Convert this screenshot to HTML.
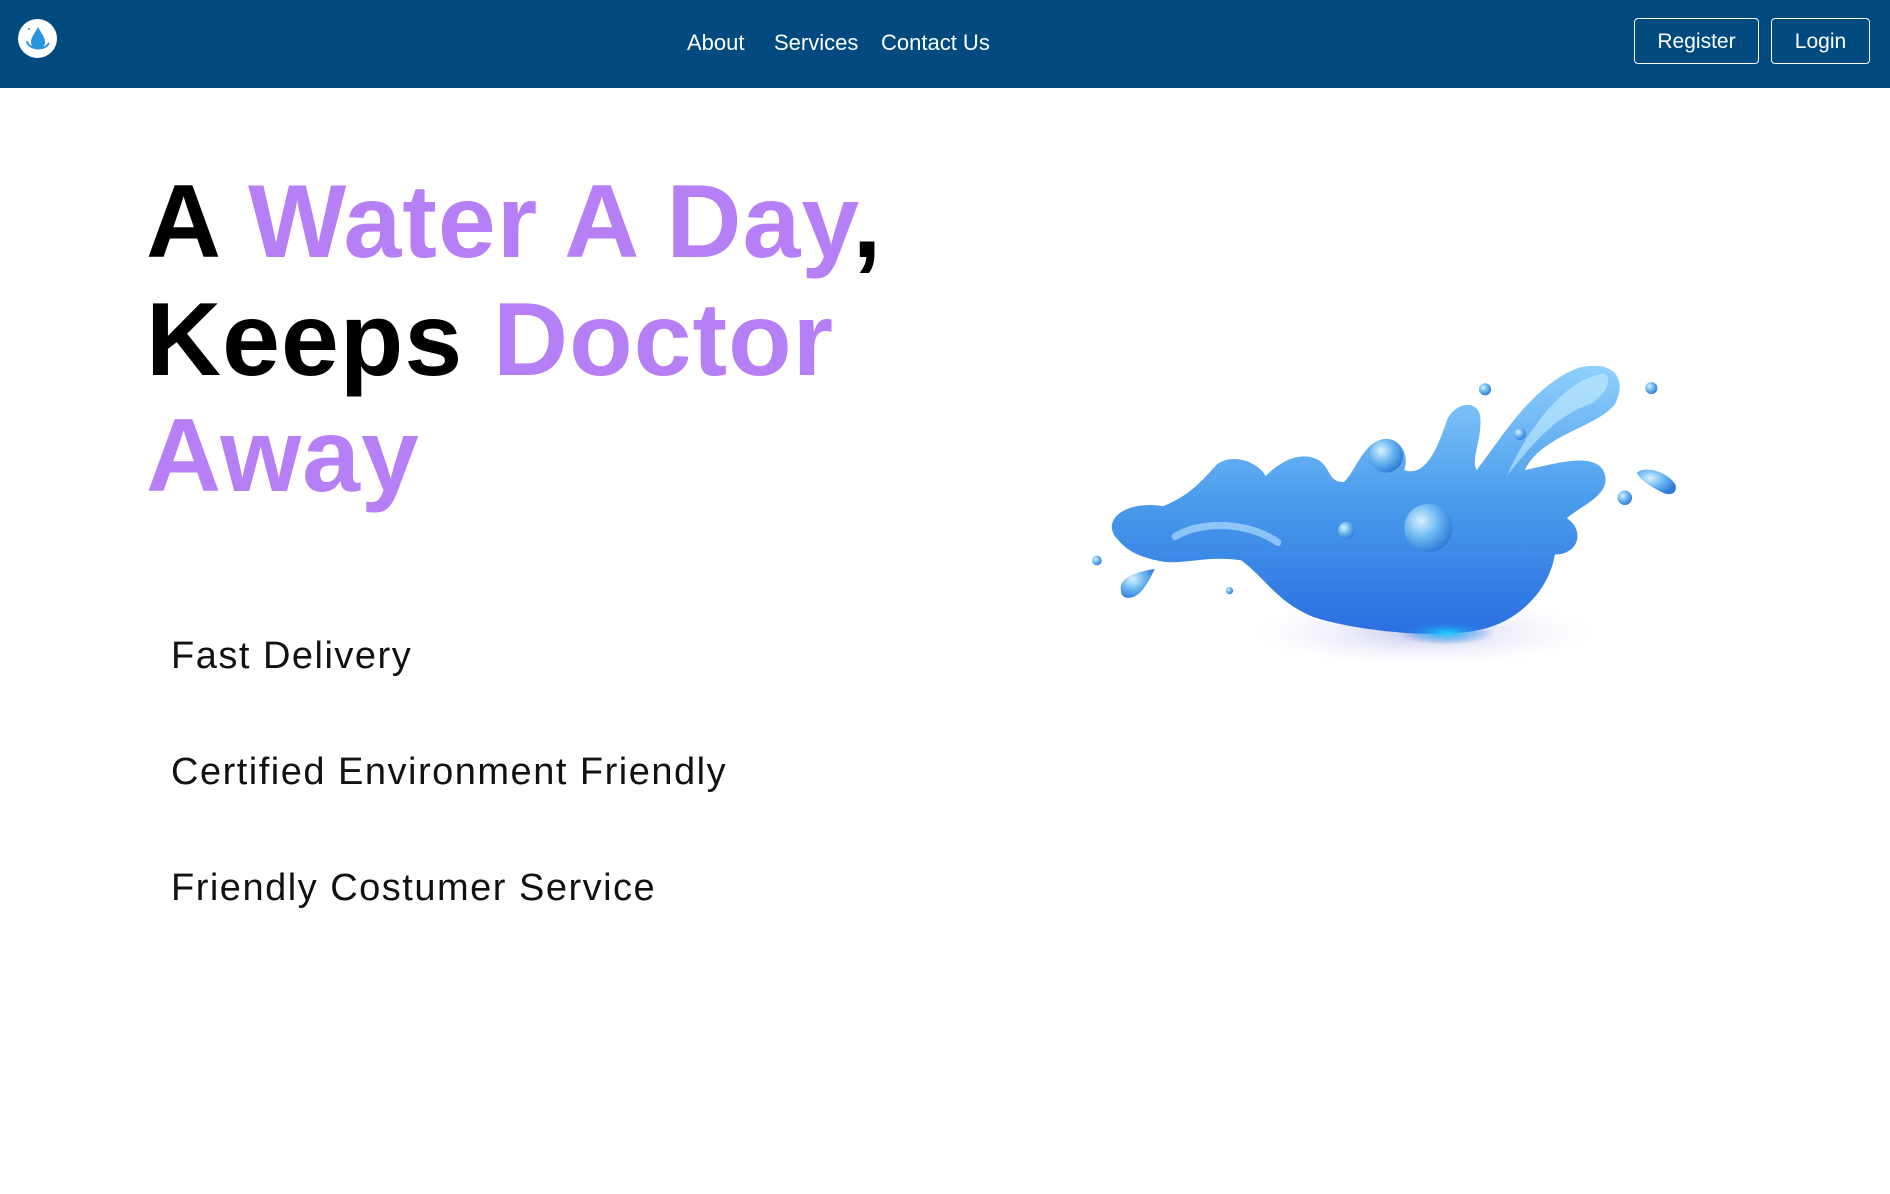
<!DOCTYPE html>
<html><head><meta charset="utf-8"><style>
*{margin:0;padding:0;box-sizing:border-box}
body{width:1890px;height:1194px;background:#fff;position:relative;overflow:hidden;font-family:"Liberation Sans",sans-serif}
nav{position:absolute;left:0;top:0;width:1890px;height:88px;background:#014a7f}
.logo{position:absolute;left:18px;top:19px;width:39px;height:39px;border-radius:50%;background:#fff}
.nl{position:absolute;top:30px;color:#fff;font-size:22px}
.btn{position:absolute;top:18px;height:46px;border:1px solid #fff;border-radius:4px;color:#fff;font-size:21px;text-align:center;line-height:46px}
h1{position:absolute;left:146px;font-size:104px;font-weight:bold;letter-spacing:1px;color:#000;white-space:nowrap;line-height:1}
.p{color:#b77ff6}
.f{position:absolute;left:171px;font-size:38px;color:#111;white-space:nowrap;line-height:1;letter-spacing:1.5px}
svg.s{position:absolute;left:0;top:0}
</style></head><body>
<nav>
<div class="logo"><svg width="39" height="39" viewBox="0 0 39 39"><path d="M20 8 C17 14 13 18 13 23 a7 7 0 0 0 14 0 C27 18 23 14 20 8Z" fill="#2a93e0"/><path d="M9 22 C10 30 26 33 31 24" stroke="#2a93e0" stroke-width="2" fill="none"/><circle cx="11" cy="10" r="1" fill="#2a93e0"/></svg></div>
<span class="nl" style="left:687px">About</span>
<span class="nl" style="left:774px">Services</span>
<span class="nl" style="left:881px">Contact Us</span>
<div class="btn" style="left:1634px;width:125px">Register</div>
<div class="btn" style="left:1771px;width:99px">Login</div>
</nav>
<h1 style="top:170px">A <span class="p">Water A Day</span>,</h1>
<h1 style="top:288px">Keeps <span class="p">Doctor</span></h1>
<h1 style="top:404px"><span class="p">Away</span></h1>
<div class="f" style="top:637px">Fast Delivery</div>
<div class="f" style="top:753px">Certified Environment Friendly</div>
<div class="f" style="top:869px">Friendly Costumer Service</div>
<svg class="s" width="1890" height="1194" viewBox="0 0 1568 990.6">
<defs>
<linearGradient id="g" x1="0" y1="0" x2="0" y2="1"><stop offset="0" stop-color="#8fd0fb"/><stop offset=".5" stop-color="#4a9cec"/><stop offset="1" stop-color="#2a6fe0"/></linearGradient>
<radialGradient id="sh" cx=".5" cy=".5" r=".5"><stop offset="0" stop-color="#8a8fd8" stop-opacity=".5"/><stop offset="1" stop-color="#fff" stop-opacity="0"/></radialGradient>
<radialGradient id="gl" cx=".5" cy=".5" r=".5"><stop offset="0" stop-color="#18d0ff"/><stop offset="1" stop-color="#2a6fe0" stop-opacity="0"/></radialGradient>
<radialGradient id="d" cx=".35" cy=".35" r=".7"><stop offset="0" stop-color="#d9f1ff"/><stop offset=".5" stop-color="#6cb8f2"/><stop offset="1" stop-color="#2e79d8"/></radialGradient>
</defs>
<ellipse cx="1180" cy="525" rx="155" ry="32" fill="url(#sh)"/>
<path d="M925 445 C915 430,935 415,965 420 C990 410,1000 395,1010 385 C1025 375,1045 385,1050 395 C1060 385,1075 375,1090 380 C1105 385,1100 400,1115 400 C1125 390,1130 370,1145 365 C1160 362,1170 375,1165 390 C1180 395,1190 380,1200 350 C1205 335,1225 330,1228 345 C1230 365,1220 380,1225 390 C1245 365,1270 320,1310 305 C1340 298,1350 315,1340 335 C1325 355,1280 360,1265 390 C1290 385,1320 375,1330 390 C1340 410,1310 420,1300 430 C1315 440,1310 460,1290 460 C1285 490,1260 515,1230 522 C1200 530,1130 525,1090 512 C1060 500,1050 480,1030 465 C1000 460,980 470,960 465 C935 460,930 450,925 445Z" fill="url(#g)"/>
<ellipse cx="1200" cy="525" rx="40" ry="10" fill="url(#gl)"/>
<path d="M1250 395 C1270 350,1300 315,1330 310 C1338 312,1335 325,1320 335 C1290 345,1270 370,1250 395Z" fill="#c8ecff" opacity=".6"/>
<path d="M975 445 C1000 430,1040 435,1060 450" stroke="#bfe6ff" stroke-width="6" fill="none" opacity=".6" stroke-linecap="round"/>
<circle cx="1150" cy="378" r="14" fill="url(#d)"/>
<circle cx="1185" cy="438" r="20" fill="url(#d)"/>
<circle cx="1117" cy="440" r="7" fill="url(#d)"/>
<circle cx="910" cy="465" r="4" fill="url(#d)"/>
<circle cx="1020" cy="490" r="3" fill="url(#d)"/>
<circle cx="1232" cy="323" r="5" fill="url(#d)"/>
<circle cx="1370" cy="322" r="5" fill="url(#d)"/>
<circle cx="1348" cy="413" r="6" fill="url(#d)"/>
<circle cx="1261" cy="360" r="5" fill="url(#d)"/>
<path d="M930 490 C928 480,940 475,958 472 C952 485,945 497,935 496 C931 495,930 493,930 490Z" fill="url(#d)"/>
<path d="M1358 392 C1366 386,1384 392,1390 402 C1392 410,1385 412,1378 408 C1370 404,1360 398,1358 392Z" fill="url(#d)"/>
</svg>
</body></html>
